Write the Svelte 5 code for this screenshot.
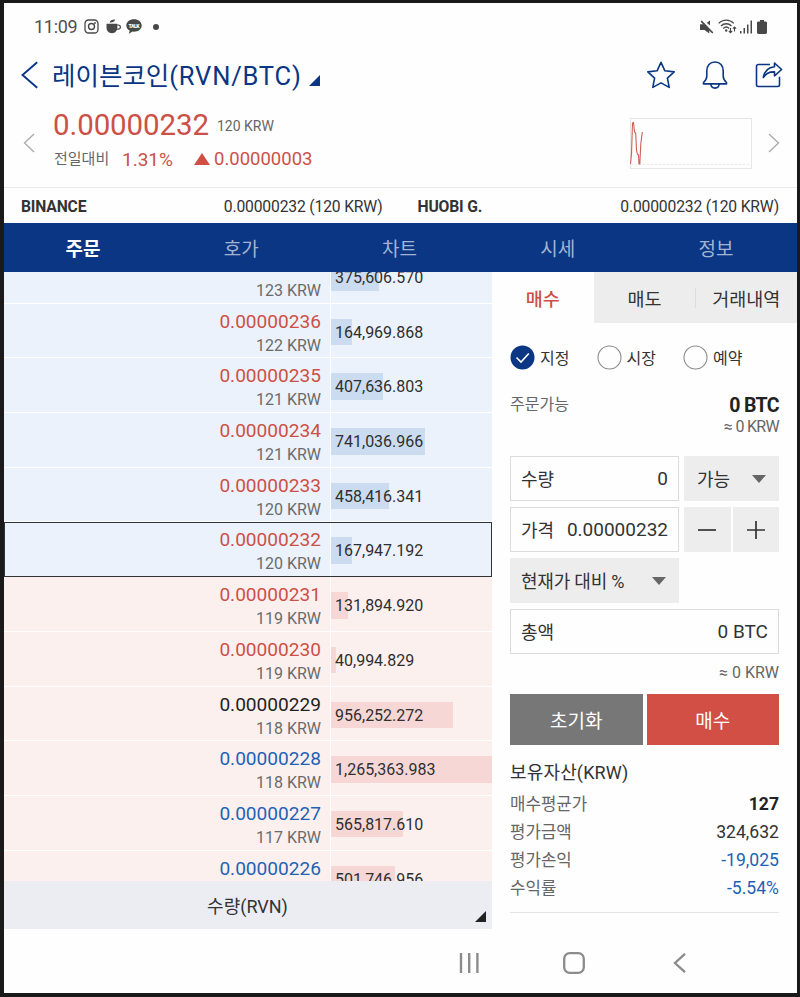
<script lang="ts">
  let tab = $state("주문");
  let side = $state("매수");
  let orderType = $state("지정");

  const tabs = ["주문", "호가", "차트", "시세", "정보"];
  const sides = ["매수", "매도", "거래내역"];
  const orderTypes = ["지정", "시장", "예약"];

  // the first row is scrolled under the tabs, only its KRW line shows
  const asks = [
    { price: "", krw: 123, qty: 375606.57, tone: "up" },
    { price: "0.00000236", krw: 122, qty: 164969.868, tone: "up" },
    { price: "0.00000235", krw: 121, qty: 407636.803, tone: "up" },
    { price: "0.00000234", krw: 121, qty: 741036.966, tone: "up" },
    { price: "0.00000233", krw: 120, qty: 458416.341, tone: "up" },
    { price: "0.00000232", krw: 120, qty: 167947.192, tone: "up" },
  ];
  const bids = [
    { price: "0.00000231", krw: 119, qty: 131894.92, tone: "up" },
    { price: "0.00000230", krw: 119, qty: 40994.829, tone: "up" },
    { price: "0.00000229", krw: 118, qty: 956252.272, tone: "even" },
    { price: "0.00000228", krw: 118, qty: 1265363.983, tone: "down" },
    { price: "0.00000227", krw: 117, qty: 565817.61, tone: "down" },
    { price: "0.00000226", krw: null, qty: 501746.956, tone: "down" },
  ];
  const current = "0.00000232";
  const book = [
    ...asks.map((row) => ({ ...row, kind: "ask" })),
    ...bids.map((row) => ({ ...row, kind: "bid" })),
  ];
  const maxQty = Math.max(...book.map((row) => row.qty));

  const assets = [
    { label: "매수평균가", value: "127", cls: "strong" },
    { label: "평가금액", value: "324,632", cls: "" },
    { label: "평가손익", value: "-19,025", cls: "down" },
    { label: "수익률", value: "-5.54%", cls: "down" },
  ];

  function formatQty(qty: number) {
    return qty.toLocaleString("en-US", { minimumFractionDigits: 3, maximumFractionDigits: 3 });
  }
</script>

<div class="device">
  <div class="status">
    <span class="clock">11:09</span>
    <svg class="insta" width="15" height="15" viewBox="0 0 15 15" fill="none" stroke="#484848">
      <rect x="1" y="1" width="13" height="13" rx="3.6" stroke-width="1.3" />
      <circle cx="7.5" cy="7.5" r="3" stroke-width="1.4" />
      <circle cx="11" cy="4" r="0.9" fill="#484848" stroke="none" />
    </svg>
    <svg class="cup" width="15" height="15" viewBox="0 0 15 15" fill="#484848">
      <path d="M3.6 3.4C4 1.2 6 .3 9.2.4 8.6 2.8 6.6 3.7 3.6 3.4Z" />
      <path d="M.5 4.8h10.8v3.7c0 3.4-2 5.7-5.4 5.7S.5 11.9.5 8.5Z" />
      <path d="M11 6h1.3a1.7 1.7 0 0 1 0 4.2H10.6" fill="none" stroke="#484848" stroke-width="1.2" />
    </svg>
    <svg class="talk" width="16" height="15" viewBox="0 0 16 15">
      <path d="M8 .3c4.4 0 7.7 2.7 7.7 6.2S12.4 12.7 8 12.7l-1.5-.1-3.6 2.1.8-3.1C1.6 10.5.3 8.7.3 6.5.3 3 3.6.3 8 .3Z" fill="#484848" />
      <text x="8" y="8.5" text-anchor="middle" fill="#fff" font-size="5.2" font-weight="900" textLength="11">TALK</text>
    </svg>
    <i class="dot"></i>
    <span class="grow"></span>
    <svg width="14" height="14" viewBox="0 0 14 14" fill="#484848">
      <path d="M0 4.2h4L9.3 9v4.5L4.5 10H0Z" />
      <path d="M6.8 2.8 10 .4v5.2Z" />
      <path d="M2.5.5 14 12.3" stroke="#fefefe" stroke-width="1.2" />
      <path d="M1.2 1.2 12.8 13" stroke="#484848" stroke-width="1.7" />
    </svg>
    <svg class="wifi" width="19" height="15" viewBox="0 0 19 15" fill="none" stroke="#484848" stroke-width="1.3">
      <path d="M.7 4.4c4.1-4.4 11-4.4 15.1 0M3 7c3-3 7.6-3 10.5 0M5.3 9.5c1.7-1.7 4.2-1.7 5.9 0" />
      <circle cx="8.2" cy="11.5" r="1.2" fill="#484848" stroke="none" />
      <path d="M12.5 9v4.5M10.9 12l1.6 1.7 1.6-1.7M16.5 12.5V8M14.9 9.7l1.6-1.7 1.6 1.7" stroke-width="1.1" />
    </svg>
    <svg class="signal" width="13" height="14" viewBox="0 0 13 14" fill="#484848">
      <rect x="0" y="11" width="1.5" height="2.5" />
      <rect x="3.5" y="8" width="1.5" height="5.5" />
      <rect x="7" y="4.5" width="1.5" height="9" />
      <rect x="10.5" y=".5" width="1.5" height="13" />
    </svg>
    <svg class="battery" width="10" height="14" viewBox="0 0 10 14" fill="#484848">
      <path d="M3 0h4v1.4h1.6A1.4 1.4 0 0 1 10 2.8v9.8A1.4 1.4 0 0 1 8.6 14H1.4A1.4 1.4 0 0 1 0 12.6V2.8A1.4 1.4 0 0 1 1.4 1.4H3Z" />
    </svg>
  </div>

  <header class="titlebar">
    <svg width="18" height="28" viewBox="0 0 18 28" fill="none" stroke="#0a3684" stroke-width="1.9">
      <path d="M16.2 1.2 1.5 14l14.7 12.8" />
    </svg>
    <h1>레이븐코인<span>(RVN/BTC)</span></h1>
    <svg class="corner" width="11" height="11" viewBox="0 0 11 11"><path d="M11 0v11H0Z" fill="#0a3684" /></svg>
    <span class="grow"></span>
    <div class="actions">
      <svg width="30" height="30" viewBox="0 0 30 30">
        <path d="m15 2.3 3.9 8.5 9.3 1.1-6.8 6.3 1.8 9.2-8.2-4.5-8.2 4.5 1.8-9.2-6.8-6.3 9.3-1.1Z" />
      </svg>
      <svg width="28" height="30" viewBox="0 0 28 30">
        <path d="M14 2c5.2 0 8.2 3.9 8.2 9v5c0 3 .9 4.5 3.3 6.5v1.4H2.5v-1.4C4.9 20.5 5.8 19 5.8 16v-5c0-5.1 3-9 8.2-9ZM9.8 24.2c.7 5.2 7.7 5.2 8.4 0" />
      </svg>
      <svg width="29" height="28" viewBox="0 0 29 28">
        <path d="M16 3.5H4.2A1.7 1.7 0 0 0 2.5 5.2v18.6a1.7 1.7 0 0 0 1.7 1.7h19.6a1.7 1.7 0 0 0 1.7-1.7v-8" />
        <path d="M20.5 2 27.6 8.5 20.5 14.8v-3.9c-5-.2-8.6 1.5-11.2 5.6C10.3 10.5 14 6.5 20.5 5.8Z" />
      </svg>
    </div>
  </header>

  <section class="quote">
    <svg width="12" height="20" viewBox="0 0 12 20" fill="none" stroke="#aaa" stroke-width="1.3">
      <path d="M11 1 1.5 10 11 19" />
    </svg>
    <div class="figures">
      <div class="line"><strong>0.00000232</strong><span class="sub">120 KRW</span></div>
      <div class="line change">
        <span class="label">전일대비</span>
        <span class="rate">1.31%</span>
        <svg width="16" height="12" viewBox="0 0 16 12"><path d="M8 0l8 12H0Z" fill="#cf4f45" /></svg>
        <span class="diff">0.00000003</span>
      </div>
    </div>
    <span class="grow"></span>
    <svg class="spark" width="122" height="51" viewBox="0 0 122 51" fill="none">
      <rect x=".5" y=".5" width="121" height="50" stroke="#e6e6e6" />
      <path d="M1 46.5h120" stroke="#e9e9e9" stroke-dasharray="2 2" />
      <path d="M.5 46 1.5 36 2.5 5 3.5 4.5l1 9.5 1.2 1 .8 17 .8 4 1.2 1 .5 9h.8l1-20 1.5-12" stroke="#cf5f56" stroke-width="1.1" />
    </svg>
    <svg width="12" height="20" viewBox="0 0 12 20" fill="none" stroke="#aaa" stroke-width="1.3">
      <path d="M1 1l9.5 9L1 19" />
    </svg>
  </section>

  <section class="exchanges">
    <div class="exchange"><b>BINANCE</b><span>0.00000232 (120 KRW)</span></div>
    <div class="exchange"><b>HUOBI G.</b><span>0.00000232 (120 KRW)</span></div>
  </section>

  <nav class="tabs">
    {#each tabs as name}
      <button class:active={tab === name} onclick={() => (tab = name)}>{name}</button>
    {/each}
  </nav>

  <main>
    <section class="book">
      <div class="rows">
        {#each book as row}
          <div class="row {row.kind}" class:current={row.price === current}>
            <div class="price">
              <span class="btc {row.tone}">{row.price}</span>
              {#if row.krw}
                <span class="krw">{row.krw} KRW</span>
              {/if}
            </div>
            <div class="qty">
              <div class="bar" style="width: {(row.qty / maxQty) * 100}%"></div>
              <span>{formatQty(row.qty)}</span>
            </div>
          </div>
        {/each}
      </div>
      <div class="unit">
        <span>수량(RVN)</span>
        <svg width="11" height="11" viewBox="0 0 11 11"><path d="M11 0v11H0Z" fill="#222" /></svg>
      </div>
    </section>

    <section class="order">
      <div class="sides">
        {#each sides as name}
          <button class:active={side === name} onclick={() => (side = name)}>{name}</button>
        {/each}
      </div>

      <div class="form">
        <div class="types">
          {#each orderTypes as name}
            <button onclick={() => (orderType = name)}>
              <svg width="25" height="25" viewBox="0 0 25 25" fill="none">
                {#if orderType === name}
                  <circle cx="12.5" cy="12.5" r="12" fill="#0a3684" />
                  <path d="m6.5 12.5 4.5 4.5 7.8-8.5" stroke="#fff" stroke-width="1.6" />
                {:else}
                  <circle cx="12.5" cy="12.5" r="11.5" stroke="#8c8c8c" stroke-width="1.1" />
                {/if}
              </svg>
              <span>{name}</span>
            </button>
          {/each}
        </div>

        <div class="available">
          <span>주문가능</span>
          <div><b>0 BTC</b><small>≈ 0 KRW</small></div>
        </div>

        <div class="fields">
          <div class="field"><span>수량</span><span>0</span></div>
          <div class="select">
            <span>가능</span>
            <svg width="14" height="8" viewBox="0 0 14 8"><path d="M0 0h14L7 8Z" fill="#666" /></svg>
          </div>
          <div class="field"><span>가격</span><span>0.00000232</span></div>
          <div class="steps">
            <button aria-label="minus"><svg width="18" height="18" viewBox="0 0 18 18"><path d="M0 9h18" /></svg></button>
            <button aria-label="plus"><svg width="18" height="18" viewBox="0 0 18 18"><path d="M0 9h18M9 0v18" /></svg></button>
          </div>
          <div class="select">
            <span class="tight">현재가 대비 %</span>
            <svg width="14" height="8" viewBox="0 0 14 8"><path d="M0 0h14L7 8Z" fill="#666" /></svg>
          </div>
          <div class="field total"><span>총액</span><span>0 BTC</span></div>
        </div>

        <div class="approx">≈ 0 KRW</div>

        <div class="submit">
          <button class="reset">초기화</button>
          <button class="buy">매수</button>
        </div>

        <div class="assets">
          <h2>보유자산(KRW)</h2>
          {#each assets as item}
            <div class="asset"><span>{item.label}</span><span class="value {item.cls}">{item.value}</span></div>
          {/each}
        </div>
      </div>
    </section>
  </main>

  <footer>
    <svg width="20" height="20" viewBox="0 0 20 20" stroke="#8c8c8c" stroke-width="2.4"><path d="M2 0v20M10.2 0v20M18.4 0v20" /></svg>
    <svg width="22" height="22" viewBox="0 0 22 22" fill="none" stroke="#8c8c8c" stroke-width="2.3"><rect x="1.2" y="1.2" width="19.6" height="19.6" rx="5.5" /></svg>
    <svg class="back" width="13" height="20" viewBox="0 0 13 20" fill="none" stroke="#8c8c8c" stroke-width="2.3"><path d="M12 .8 2 10l10 9.2" /></svg>
  </footer>
</div>

<style>
  :global(body) {
    margin: 0;
  }
  .device {
    box-sizing: border-box;
    display: flex;
    flex-direction: column;
    width: 800px;
    height: 997px;
    overflow: hidden;
    border: 4px solid #1a1a1a;
    border-width: 3px 3px 4px 4px;
    background: #fefefe;
    color: #333;
    font-family: Roboto, "Noto Sans CJK KR", sans-serif;
  }
  svg {
    display: block;
    flex: none;
  }
  button {
    padding: 0;
    border: 0;
    background: none;
    color: inherit;
    font: inherit;
  }
  .grow {
    flex: 1;
  }
  .up {
    color: #cb5148;
  }
  .down {
    color: #1f62b5;
  }

  .status {
    display: flex;
    align-items: center;
    height: 47px;
    padding: 0 30px;
    color: #505050;
  }
  .clock {
    width: 50px;
    font-size: 18px;
    letter-spacing: -0.3px;
  }
  .cup {
    margin-left: 7px;
  }
  .talk {
    margin-left: 5px;
  }
  .dot {
    width: 6px;
    height: 6px;
    margin-left: 11px;
    border-radius: 50%;
    background: #484848;
  }
  .wifi {
    margin-left: 4px;
  }
  .signal {
    margin-left: 3px;
  }
  .battery {
    margin-left: 4px;
  }

  .titlebar {
    display: flex;
    align-items: center;
    height: 49px;
    padding: 0 14px 0 17px;
    color: #0a3684;
  }
  h1 {
    margin: 2px 0 0 13px;
    font-size: 25.5px;
    font-weight: 400;
    line-height: 40px;
  }
  h1 span {
    letter-spacing: 0.8px;
  }
  .corner {
    margin: 12px 0 0 7px;
  }
  .actions {
    display: flex;
    align-items: center;
    gap: 25px;
    fill: none;
    stroke: #0a3684;
    stroke-width: 1.6;
    stroke-linejoin: round;
  }

  .quote {
    display: flex;
    align-items: center;
    height: 88px;
    padding: 0 17px 0 19px;
    border-bottom: 1px solid #e9e9e9;
  }
  .figures {
    display: flex;
    flex-direction: column;
    margin-left: 18px;
    margin-bottom: 3px;
  }
  .line {
    display: flex;
    align-items: center;
    height: 35px;
    color: #cb5148;
  }
  .line.change {
    height: 33px;
  }
  .line strong {
    width: 164px;
    font-size: 29.5px;
    font-weight: 400;
    letter-spacing: -0.1px;
  }
  .sub {
    padding-top: 1px;
    color: #666;
    font-size: 14px;
  }
  .label {
    width: 69px;
    color: #666;
    font-size: 15px;
    line-height: 20px;
    text-indent: 1px;
  }
  .rate {
    width: 72px;
    font-size: 19px;
  }
  .diff {
    margin-left: 4px;
    font-size: 18.5px;
  }
  .spark {
    margin-right: 16px;
  }

  .exchanges {
    display: flex;
    gap: 35px;
    height: 35px;
    padding: 0 18px 0 17px;
  }
  .exchange {
    display: flex;
    flex: 1;
    align-items: center;
    justify-content: space-between;
    padding-top: 1px;
    font-size: 15.7px;
    letter-spacing: -0.17px;
  }

  .tabs {
    display: flex;
    height: 49px;
    padding-right: 2px;
    background: #0a3684;
  }
  .tabs button {
    flex: 1;
    color: #a3b4d3;
    font-size: 19px;
  }
  .tabs .active {
    color: #fff;
    font-weight: 700;
  }

  main {
    display: flex;
    height: 657px;
  }
  .book {
    display: flex;
    flex: none;
    flex-direction: column;
    width: 488px;
  }
  .rows {
    display: flex;
    flex-direction: column;
    height: 609px;
    overflow: hidden;
  }
  .row {
    box-sizing: border-box;
    display: flex;
    flex: none;
    height: 54.7px;
    border-bottom: 1.5px solid #fff;
  }
  .row:first-child {
    margin-top: -23px;
  }
  .ask {
    background: #ebf2fb;
  }
  .bid {
    background: #fcf0ef;
  }
  .row.current {
    border-bottom: 0;
    outline: 1.5px solid #2e3338;
    outline-offset: -1px;
    z-index: 1;
  }
  .price {
    box-sizing: border-box;
    display: flex;
    flex-direction: column;
    width: 327px;
    padding: 6px 9px 0 0;
    border-right: 1.5px solid #fff;
    text-align: right;
  }
  .btc {
    height: 25px;
    font-size: 19.1px;
    line-height: 24px;
  }
  .btc.even {
    color: #222;
  }
  .krw {
    font-size: 16px;
    line-height: 22px;
    color: #6b6b6b;
  }
  .qty {
    display: grid;
    flex: 1;
    align-content: start;
    padding-top: 15px;
  }
  .qty > * {
    grid-area: 1 / 1;
  }
  .bar {
    height: 26.5px;
  }
  .ask .bar {
    background: #cbdcf1;
  }
  .bid .bar {
    background: #f6d7d5;
  }
  .qty span {
    padding-left: 4px;
    font-size: 16px;
    line-height: 28px;
    color: #2f2f2f;
  }
  .unit {
    display: flex;
    align-items: center;
    justify-content: flex-end;
    height: 48px;
    padding: 0 6px 0 16px;
    background: #ecedf3;
    font-size: 18px;
  }
  .unit span {
    flex: 1;
    text-align: center;
  }
  .unit svg {
    margin-top: 22px;
  }

  .order {
    flex: 1;
    min-width: 0;
  }
  .sides {
    display: flex;
    height: 51px;
    background: #ededed;
    font-size: 18.5px;
  }
  .sides button {
    flex: 1;
  }
  .sides button:first-child {
    background: #fefefe;
  }
  .sides button:last-child {
    background: linear-gradient(#ddd, #ddd) 0 50% / 1px 20px no-repeat;
  }
  .sides .active {
    color: #cf4f45;
    font-weight: 500;
  }
  .form {
    display: flex;
    flex-direction: column;
    padding: 0 18px;
  }
  .types {
    display: flex;
    height: 69px;
    font-size: 16px;
  }
  .types button {
    display: flex;
    align-items: center;
    gap: 5px;
    width: 86.5px;
  }
  .types span {
    padding-bottom: 1px;
  }
  .available {
    display: flex;
    justify-content: space-between;
    height: 64px;
    color: #666;
    font-size: 16px;
    line-height: 25px;
  }
  .available div {
    display: flex;
    flex-direction: column;
    padding-top: 3px;
    text-align: right;
  }
  .available b {
    color: #222;
    font-size: 19.5px;
    letter-spacing: -0.6px;
    line-height: 22px;
  }
  .available small {
    font-size: 16px;
    letter-spacing: -0.7px;
    line-height: 20px;
  }
  .fields {
    display: grid;
    grid-template-columns: 169px 95px;
    gap: 6px 5px;
    font-size: 18px;
  }
  .field,
  .select {
    box-sizing: border-box;
    display: flex;
    align-items: center;
    justify-content: space-between;
    height: 45px;
    padding: 0 10px;
    border: 1px solid #dcdcdc;
  }
  .field span:first-child,
  .select span {
    padding-bottom: 2px;
  }
  .field span:last-child {
    font-size: 19px;
  }
  .select {
    padding: 0 13px;
    border: 0;
    background: #ededed;
  }
  .select .tight {
    margin-left: -2px;
    letter-spacing: -0.2px;
  }
  .total {
    grid-column: 1 / 3;
  }
  .steps {
    display: flex;
    gap: 2px;
  }
  .steps button {
    display: grid;
    flex: 1;
    place-items: center;
    background: #ededed;
    stroke: #333;
    stroke-width: 1.7;
  }
  .approx {
    height: 40px;
    color: #666;
    font-size: 16px;
    line-height: 38px;
    text-align: right;
  }
  .submit {
    display: flex;
    gap: 4px;
    height: 51px;
    color: #fff;
    font-size: 19px;
  }
  .submit button {
    flex: 1;
  }
  .reset {
    background: #777;
  }
  .buy {
    background: #d14f45;
  }
  .assets {
    padding-bottom: 10px;
    border-bottom: 1px solid #e4e4e9;
  }
  h2 {
    margin: 13px 0 2px;
    font-size: 18px;
    font-weight: 400;
    letter-spacing: 0.15px;
    line-height: 30px;
  }
  .asset {
    display: flex;
    justify-content: space-between;
    color: #666;
    font-size: 16.8px;
    line-height: 28px;
  }
  .value {
    color: #333;
    font-size: 17.6px;
  }
  .value.strong {
    color: #222;
    font-weight: 700;
  }
  .value.down {
    color: #1f62b5;
  }

  footer {
    display: flex;
    flex: 1;
    align-items: center;
    gap: 84px;
    padding: 4px 0 0 455px;
  }
  .back {
    margin-left: 4px;
  }
</style>
